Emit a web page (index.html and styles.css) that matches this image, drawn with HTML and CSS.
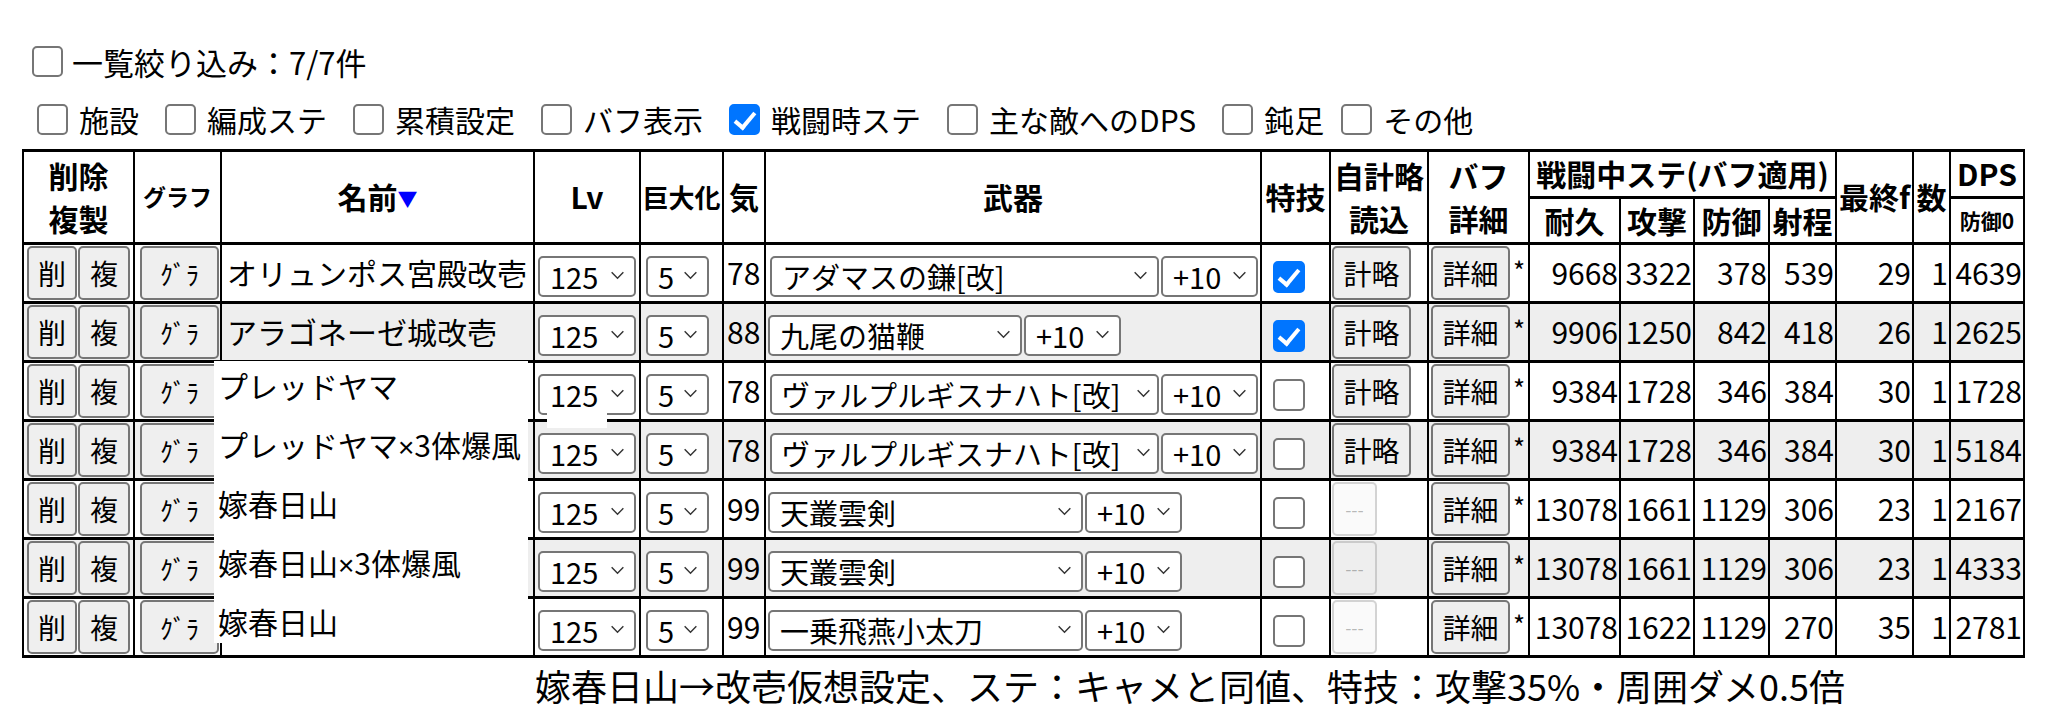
FILE: index.html
```html
<!DOCTYPE html>
<html lang="ja">
<head>
<meta charset="utf-8">
<title>一覧</title>
<link rel="stylesheet" href="styles.css">
</head>
<body>
<div class="filters">
  <label class="opt-main"><input type="checkbox" class="cb"><span>一覧絞り込み：7/7件</span></label>
  <div class="opt-row">
    <label class="opt"><input type="checkbox" class="cb"><span>施設</span></label>
    <label class="opt"><input type="checkbox" class="cb"><span>編成ステ</span></label>
    <label class="opt"><input type="checkbox" class="cb"><span>累積設定</span></label>
    <label class="opt"><input type="checkbox" class="cb"><span>バフ表示</span></label>
    <label class="opt"><input type="checkbox" class="cb" checked><span>戦闘時ステ</span></label>
    <label class="opt"><input type="checkbox" class="cb"><span>主な敵へのDPS</span></label>
    <label class="opt opt-tight"><input type="checkbox" class="cb"><span>鈍足</span></label>
    <label class="opt"><input type="checkbox" class="cb"><span>その他</span></label>
  </div>
</div>

<table class="grid">
  <colgroup>
    <col class="c-del"><col class="c-graph"><col class="c-name"><col class="c-lv"><col class="c-big"><col class="c-ki">
    <col class="c-weapon"><col class="c-skill"><col class="c-plan"><col class="c-buff">
    <col class="c-hp"><col class="c-atk"><col class="c-def"><col class="c-rng">
    <col class="c-fin"><col class="c-num"><col class="c-dps">
  </colgroup>
  <thead>
    <tr class="h1">
      <th rowspan="2">削除<br>複製</th>
      <th rowspan="2" class="th-small">グラフ</th>
      <th rowspan="2">名前<span class="sort">▼</span></th>
      <th rowspan="2">Lv</th>
      <th rowspan="2" class="th-mid">巨大化</th>
      <th rowspan="2">気</th>
      <th rowspan="2">武器</th>
      <th rowspan="2">特技</th>
      <th rowspan="2">自計略<br>読込</th>
      <th rowspan="2">バフ<br>詳細</th>
      <th colspan="4">戦闘中ステ(バフ適用)</th>
      <th rowspan="2">最終f</th>
      <th rowspan="2">数</th>
      <th>DPS</th>
    </tr>
    <tr class="h2">
      <th>耐久</th><th>攻撃</th><th>防御</th><th>射程</th><th class="th-tiny">防御0</th>
    </tr>
  </thead>
  <tbody>
    <tr>
      <td class="ops"><button class="btn b-del">削</button><button class="btn b-dup">複</button></td>
      <td class="ops"><button class="btn b-graph">ｸﾞﾗ</button></td>
      <td class="name">オリュンポス宮殿改壱</td>
      <td class="lv"><span class="sel s-lv"><select><option>125</option></select><svg class="chev" viewBox="0 0 16 10"><polyline points="1.5,1.5 8,8 14.5,1.5"/></svg></span></td>
      <td class="big"><span class="sel s-big"><select><option>5</option></select><svg class="chev" viewBox="0 0 16 10"><polyline points="1.5,1.5 8,8 14.5,1.5"/></svg></span></td>
      <td class="ki">78</td>
      <td class="weapon"><span class="sel s-w389"><select><option>アダマスの鎌[改]</option></select><svg class="chev" viewBox="0 0 16 10"><polyline points="1.5,1.5 8,8 14.5,1.5"/></svg></span><span class="sel s-plus"><select><option>+10</option></select><svg class="chev" viewBox="0 0 16 10"><polyline points="1.5,1.5 8,8 14.5,1.5"/></svg></span></td>
      <td class="skill"><input type="checkbox" class="cb" checked></td>
      <td class="plan"><button class="btn b-wide">計略</button></td>
      <td class="buff"><button class="btn b-wide">詳細</button><span class="mark">*</span></td>
      <td class="num">9668</td><td class="num">3322</td><td class="num">378</td><td class="num">539</td>
      <td class="num">29</td><td class="num">1</td><td class="num">4639</td>
    </tr>
    <tr class="alt">
      <td class="ops"><button class="btn b-del">削</button><button class="btn b-dup">複</button></td>
      <td class="ops"><button class="btn b-graph">ｸﾞﾗ</button></td>
      <td class="name">アラゴネーゼ城改壱</td>
      <td class="lv"><span class="sel s-lv"><select><option>125</option></select><svg class="chev" viewBox="0 0 16 10"><polyline points="1.5,1.5 8,8 14.5,1.5"/></svg></span></td>
      <td class="big"><span class="sel s-big"><select><option>5</option></select><svg class="chev" viewBox="0 0 16 10"><polyline points="1.5,1.5 8,8 14.5,1.5"/></svg></span></td>
      <td class="ki">88</td>
      <td class="weapon"><span class="sel s-w254"><select><option>九尾の猫鞭</option></select><svg class="chev" viewBox="0 0 16 10"><polyline points="1.5,1.5 8,8 14.5,1.5"/></svg></span><span class="sel s-plus"><select><option>+10</option></select><svg class="chev" viewBox="0 0 16 10"><polyline points="1.5,1.5 8,8 14.5,1.5"/></svg></span></td>
      <td class="skill"><input type="checkbox" class="cb" checked></td>
      <td class="plan"><button class="btn b-wide">計略</button></td>
      <td class="buff"><button class="btn b-wide">詳細</button><span class="mark">*</span></td>
      <td class="num">9906</td><td class="num">1250</td><td class="num">842</td><td class="num">418</td>
      <td class="num">26</td><td class="num">1</td><td class="num">2625</td>
    </tr>
    <tr>
      <td class="ops"><button class="btn b-del">削</button><button class="btn b-dup">複</button></td>
      <td class="ops"><button class="btn b-graph">ｸﾞﾗ</button></td>
      <td class="name ghost"><span class="ghost-box">プレッドヤマ</span></td>
      <td class="lv lv-chip"><span class="sel s-lv"><select><option>125</option></select><svg class="chev" viewBox="0 0 16 10"><polyline points="1.5,1.5 8,8 14.5,1.5"/></svg></span><span class="chip"></span></td>
      <td class="big"><span class="sel s-big"><select><option>5</option></select><svg class="chev" viewBox="0 0 16 10"><polyline points="1.5,1.5 8,8 14.5,1.5"/></svg></span></td>
      <td class="ki">78</td>
      <td class="weapon"><span class="sel s-w389 s-tight"><select><option>ヴァルプルギスナハト[改]</option></select><svg class="chev" viewBox="0 0 16 10"><polyline points="1.5,1.5 8,8 14.5,1.5"/></svg></span><span class="sel s-plus"><select><option>+10</option></select><svg class="chev" viewBox="0 0 16 10"><polyline points="1.5,1.5 8,8 14.5,1.5"/></svg></span></td>
      <td class="skill"><input type="checkbox" class="cb"></td>
      <td class="plan"><button class="btn b-wide">計略</button></td>
      <td class="buff"><button class="btn b-wide">詳細</button><span class="mark">*</span></td>
      <td class="num">9384</td><td class="num">1728</td><td class="num">346</td><td class="num">384</td>
      <td class="num">30</td><td class="num">1</td><td class="num">1728</td>
    </tr>
    <tr class="alt">
      <td class="ops"><button class="btn b-del">削</button><button class="btn b-dup">複</button></td>
      <td class="ops"><button class="btn b-graph">ｸﾞﾗ</button></td>
      <td class="name ghost"><span class="ghost-box">プレッドヤマ<span class="x">×</span>3体爆風</span></td>
      <td class="lv"><span class="sel s-lv"><select><option>125</option></select><svg class="chev" viewBox="0 0 16 10"><polyline points="1.5,1.5 8,8 14.5,1.5"/></svg></span></td>
      <td class="big"><span class="sel s-big"><select><option>5</option></select><svg class="chev" viewBox="0 0 16 10"><polyline points="1.5,1.5 8,8 14.5,1.5"/></svg></span></td>
      <td class="ki">78</td>
      <td class="weapon"><span class="sel s-w389 s-tight"><select><option>ヴァルプルギスナハト[改]</option></select><svg class="chev" viewBox="0 0 16 10"><polyline points="1.5,1.5 8,8 14.5,1.5"/></svg></span><span class="sel s-plus"><select><option>+10</option></select><svg class="chev" viewBox="0 0 16 10"><polyline points="1.5,1.5 8,8 14.5,1.5"/></svg></span></td>
      <td class="skill"><input type="checkbox" class="cb"></td>
      <td class="plan"><button class="btn b-wide">計略</button></td>
      <td class="buff"><button class="btn b-wide">詳細</button><span class="mark">*</span></td>
      <td class="num">9384</td><td class="num">1728</td><td class="num">346</td><td class="num">384</td>
      <td class="num">30</td><td class="num">1</td><td class="num">5184</td>
    </tr>
    <tr>
      <td class="ops"><button class="btn b-del">削</button><button class="btn b-dup">複</button></td>
      <td class="ops"><button class="btn b-graph">ｸﾞﾗ</button></td>
      <td class="name ghost"><span class="ghost-box">嫁春日山</span></td>
      <td class="lv"><span class="sel s-lv"><select><option>125</option></select><svg class="chev" viewBox="0 0 16 10"><polyline points="1.5,1.5 8,8 14.5,1.5"/></svg></span></td>
      <td class="big"><span class="sel s-big"><select><option>5</option></select><svg class="chev" viewBox="0 0 16 10"><polyline points="1.5,1.5 8,8 14.5,1.5"/></svg></span></td>
      <td class="ki">99</td>
      <td class="weapon"><span class="sel s-w315"><select><option>天叢雲剣</option></select><svg class="chev" viewBox="0 0 16 10"><polyline points="1.5,1.5 8,8 14.5,1.5"/></svg></span><span class="sel s-plus"><select><option>+10</option></select><svg class="chev" viewBox="0 0 16 10"><polyline points="1.5,1.5 8,8 14.5,1.5"/></svg></span></td>
      <td class="skill"><input type="checkbox" class="cb"></td>
      <td class="plan"><button class="btn b-off" disabled>---</button></td>
      <td class="buff"><button class="btn b-wide">詳細</button><span class="mark">*</span></td>
      <td class="num">13078</td><td class="num">1661</td><td class="num">1129</td><td class="num">306</td>
      <td class="num">23</td><td class="num">1</td><td class="num">2167</td>
    </tr>
    <tr class="alt">
      <td class="ops"><button class="btn b-del">削</button><button class="btn b-dup">複</button></td>
      <td class="ops"><button class="btn b-graph">ｸﾞﾗ</button></td>
      <td class="name ghost"><span class="ghost-box">嫁春日山<span class="x">×</span>3体爆風</span></td>
      <td class="lv"><span class="sel s-lv"><select><option>125</option></select><svg class="chev" viewBox="0 0 16 10"><polyline points="1.5,1.5 8,8 14.5,1.5"/></svg></span></td>
      <td class="big"><span class="sel s-big"><select><option>5</option></select><svg class="chev" viewBox="0 0 16 10"><polyline points="1.5,1.5 8,8 14.5,1.5"/></svg></span></td>
      <td class="ki">99</td>
      <td class="weapon"><span class="sel s-w315"><select><option>天叢雲剣</option></select><svg class="chev" viewBox="0 0 16 10"><polyline points="1.5,1.5 8,8 14.5,1.5"/></svg></span><span class="sel s-plus"><select><option>+10</option></select><svg class="chev" viewBox="0 0 16 10"><polyline points="1.5,1.5 8,8 14.5,1.5"/></svg></span></td>
      <td class="skill"><input type="checkbox" class="cb"></td>
      <td class="plan"><button class="btn b-off" disabled>---</button></td>
      <td class="buff"><button class="btn b-wide">詳細</button><span class="mark">*</span></td>
      <td class="num">13078</td><td class="num">1661</td><td class="num">1129</td><td class="num">306</td>
      <td class="num">23</td><td class="num">1</td><td class="num">4333</td>
    </tr>
    <tr>
      <td class="ops"><button class="btn b-del">削</button><button class="btn b-dup">複</button></td>
      <td class="ops"><button class="btn b-graph">ｸﾞﾗ</button></td>
      <td class="name ghost ghost-last"><span class="ghost-box">嫁春日山</span></td>
      <td class="lv"><span class="sel s-lv"><select><option>125</option></select><svg class="chev" viewBox="0 0 16 10"><polyline points="1.5,1.5 8,8 14.5,1.5"/></svg></span></td>
      <td class="big"><span class="sel s-big"><select><option>5</option></select><svg class="chev" viewBox="0 0 16 10"><polyline points="1.5,1.5 8,8 14.5,1.5"/></svg></span></td>
      <td class="ki">99</td>
      <td class="weapon"><span class="sel s-w315"><select><option>一乗飛燕小太刀</option></select><svg class="chev" viewBox="0 0 16 10"><polyline points="1.5,1.5 8,8 14.5,1.5"/></svg></span><span class="sel s-plus"><select><option>+10</option></select><svg class="chev" viewBox="0 0 16 10"><polyline points="1.5,1.5 8,8 14.5,1.5"/></svg></span></td>
      <td class="skill"><input type="checkbox" class="cb"></td>
      <td class="plan"><button class="btn b-off" disabled>---</button></td>
      <td class="buff"><button class="btn b-wide">詳細</button><span class="mark">*</span></td>
      <td class="num">13078</td><td class="num">1622</td><td class="num">1129</td><td class="num">270</td>
      <td class="num">35</td><td class="num">1</td><td class="num">2781</td>
    </tr>
  </tbody>
</table>

<p class="note">嫁春日山→改壱仮想設定、ステ：キャメと同値、特技：攻撃35%・周囲ダメ0.5倍</p>
</body>
</html>
```

FILE: styles.css
```css
* { box-sizing: border-box; }

html, body {
  margin: 0;
  padding: 0;
  background: #fff;
}

body {
  width: 2072px;
  padding-left: 22px;
  font-family: "Noto Sans CJK JP", "Noto Sans", sans-serif;
  color: #000;
}

/* ---------- filters ---------- */
.filters {
  padding-top: 39px;
}

.opt-main {
  display: flex;
  align-items: center;
  height: 44px;
  padding-left: 10px;
  font-size: 31px;
  gap: 9px;
}

.opt-row {
  display: flex;
  align-items: center;
  height: 44px;
  margin-top: 14px;
  padding-left: 15px;
  font-size: 30px;
}

.opt {
  display: flex;
  align-items: center;
  gap: 11px;
  margin-right: 26px;
}

.opt-tight { margin-right: 17px; }

/* ---------- checkbox ---------- */
.cb {
  appearance: none;
  -webkit-appearance: none;
  position: relative;
  flex: none;
  width: 31px;
  height: 31px;
  margin: 0;
  border: 2px solid #767676;
  border-radius: 5px;
  background: #fff;
}

.cb:checked {
  background: #0075ff;
  border-color: #0075ff;
}

.cb:checked::after {
  content: "";
  position: absolute;
  left: 8px;
  top: 2px;
  width: 8px;
  height: 17px;
  border-right: 4px solid #fff;
  border-bottom: 4px solid #fff;
  transform: rotate(40deg);
}

/* ---------- table ---------- */
.grid {
  margin-top: 8px;
  width: 2001px;
  table-layout: fixed;
  border-collapse: collapse;
  font-size: 30px;
  line-height: 1.45;
}

.c-del { width: 111px; }
.c-graph { width: 87px; }
.c-name { width: 313px; }
.c-lv { width: 106px; }
.c-big { width: 83px; }
.c-ki { width: 42px; }
.c-weapon { width: 496px; }
.c-skill { width: 69px; }
.c-plan { width: 98px; }
.c-buff { width: 101px; }
.c-hp { width: 91px; }
.c-atk { width: 74px; }
.c-def { width: 75px; }
.c-rng { width: 67px; }
.c-fin { width: 77px; }
.c-num { width: 37px; }
.c-dps { width: 74px; }

.grid th,
.grid td {
  border-left: 2px solid #000;
  border-right: 2px solid #000;
  border-top: 3px solid #000;
  border-bottom: 3px solid #000;
  white-space: nowrap;
  overflow: visible;
}

.grid th {
  font-weight: bold;
  padding: 0;
  text-align: center;
  vertical-align: middle;
  background: #fff;
}

.grid .h1 th { height: 45px; }
.grid .h2 th { height: 42px; }

.th-small { font-size: 23px; }
.th-mid { font-size: 26px; }
.th-tiny { font-size: 21px; }

.sort {
  color: #0000ff;
  font-size: 20px;
  vertical-align: 2px;
}

.grid td {
  height: 57.5px;
  padding: 1px 2px;
  vertical-align: middle;
}

.grid tr.alt td { background: #eee; }

.name { padding-left: 5px !important; }

.x { font-family: "Liberation Sans", sans-serif; font-size: 28px; }

.num {
  text-align: right;
  padding-right: 1px !important;
}

.ki { padding-left: 3px !important; }

.skill { padding-left: 11px !important; }
.skill .cb { vertical-align: middle; width: 32px; height: 32px; }

/* ---------- buttons ---------- */
.btn {
  height: 54px;
  margin: 0;
  padding: 0;
  font-family: inherit;
  font-size: 28px;
  color: #000;
  background: #efefef;
  border: 2px solid #767676;
  border-radius: 5px;
  vertical-align: middle;
}

.ops { padding: 1px 2px 1px 3px !important; white-space: nowrap; }
.b-del { width: 50px; }
.b-dup { width: 52px; margin-left: 1px; }
.b-graph { width: 79px; margin-left: 2px; font-size: 26px; }
.b-wide { width: 79px; }
.plan { padding-left: 1px !important; }
.buff { padding-left: 2px !important; }

.b-off {
  width: 45px;
  font-size: 18px;
  color: rgba(16, 16, 16, 0.3);
  background: rgba(239, 239, 239, 0.3);
  border-color: rgba(118, 118, 118, 0.3);
}

.mark {
  display: inline-block;
  vertical-align: top;
  margin-left: 3px;
  margin-top: 11px;
  font-size: 26px;
  line-height: 1;
}

/* ---------- selects ---------- */
.sel {
  position: relative;
  display: inline-block;
  vertical-align: middle;
  height: 41px;
}

.sel select {
  appearance: none;
  -webkit-appearance: none;
  width: 100%;
  height: 41px;
  margin: 0;
  padding: 0 24px 0 10px;
  font-family: inherit;
  font-size: 29px;
  line-height: 37px;
  color: #000;
  background: #fff;
  border: 2px solid #767676;
  border-radius: 5px;
}

.s-tight select { padding-left: 9px; padding-right: 20px; }

.chev {
  position: absolute;
  right: 11px;
  top: 16px;
  width: 15px;
  height: 9px;
  pointer-events: none;
  fill: none;
  stroke: #333;
  stroke-width: 1.6;
}

.s-tight .chev { right: 8px; }

.s-lv { width: 98px; margin-left: 1px; }
.s-big { width: 63px; margin-left: 3px; }
.s-w389 { width: 389px; margin-left: 2px; }
.s-w254 { width: 254px; margin-left: 0; }
.s-w315 { width: 315px; margin-left: 0; }
.s-plus { width: 97px; margin-left: 2px; }

/* ---------- overlaid name cells ---------- */
.ghost { position: relative; }

.ghost-box {
  position: absolute;
  left: -8px;
  right: 5px;
  top: -2px;
  bottom: -4px;
  padding: 3px 0 0 4px;
  background: #fff;
  z-index: 1;
}

.ghost-last .ghost-box { bottom: 12px; }

.lv-chip { position: relative; }

.chip {
  position: absolute;
  left: 12px;
  top: 46px;
  width: 60px;
  height: 19px;
  background: #fff;
  z-index: 1;
}

/* ---------- note ---------- */
.note {
  margin: 1px 0 0 513px;
  font-size: 36px;
  line-height: 1.45;
}
```
